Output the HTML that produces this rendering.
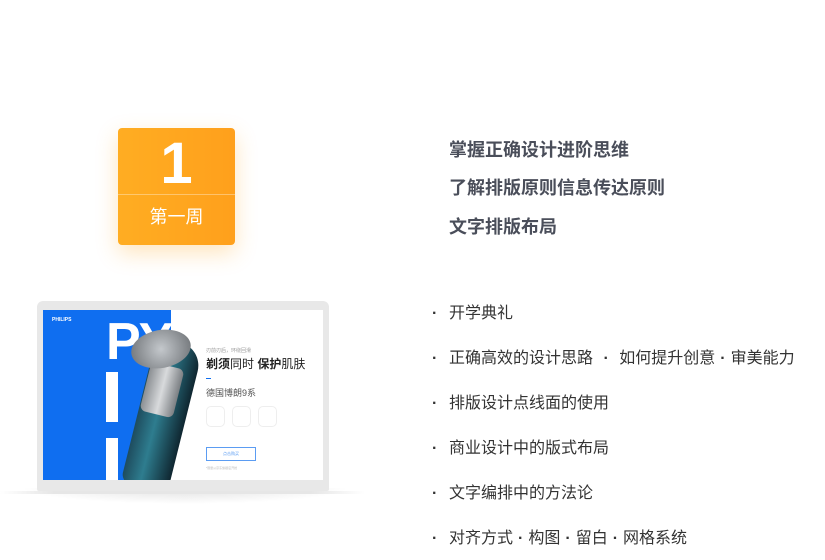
<!DOCTYPE html>
<html><head><meta charset="utf-8"><style>
*{margin:0;padding:0;box-sizing:border-box}
body{width:825px;height:560px;background:#fff;position:relative;overflow:hidden;font-family:"Liberation Sans","Noto Sans CJK SC",sans-serif}
.abs{position:absolute}
.box{left:118px;top:128px;width:117px;height:117px;border-radius:4px;background:linear-gradient(90deg,#ffad22,#ffa01c);box-shadow:0 8px 22px rgba(255,170,40,.3)}
.h{left:449px;font-size:18px;font-weight:bold;color:#4a4e5a;line-height:24px;white-space:nowrap}
.li{left:432px;font-size:16px;color:#333;line-height:22px;white-space:nowrap}
.li b{font-weight:bold;display:inline-block;width:17px}
.li i{font-style:normal;font-weight:bold;margin:0 6px}
.li u{text-decoration:none;font-weight:bold;margin:0 5px}
</style></head><body>
<div class="abs box"></div>
<div class="abs" style="left:118px;top:134px;width:117px;text-align:center;color:#fff;font-size:58px;font-weight:bold;line-height:60px">1</div>
<div class="abs" style="left:118px;top:194px;width:117px;height:1px;background:rgba(255,255,255,.35)"></div>
<div class="abs" style="left:118px;top:204px;width:117px;text-align:center;color:#fff;font-size:18px;line-height:26px">第一周</div>

<div class="abs h" style="top:138px">掌握正确设计进阶思维</div>
<div class="abs h" style="top:176px">了解排版原则信息传达原则</div>
<div class="abs h" style="top:215px">文字排版布局</div>

<div class="abs li" style="top:303px"><b>·</b>开学典礼</div>
<div class="abs li" style="top:348px"><b>·</b>正确高效的设计思路 <i>·</i> 如何提升创意<u>·</u>审美能力</div>
<div class="abs li" style="top:393px"><b>·</b>排版设计点线面的使用</div>
<div class="abs li" style="top:438px"><b>·</b>商业设计中的版式布局</div>
<div class="abs li" style="top:483px"><b>·</b>文字编排中的方法论</div>
<div class="abs li" style="top:528px"><b>·</b>对齐方式<u>·</u>构图<u>·</u>留白<u>·</u>网格系统</div>

<div class="abs" style="left:20px;top:488px;width:330px;height:16px;background:radial-gradient(ellipse at center top,rgba(0,0,0,.12),rgba(0,0,0,0) 70%)"></div>
<div class="abs" style="left:0;top:491px;width:365px;height:3px;background:linear-gradient(90deg,rgba(230,230,230,0),#e6e6e6 15%,#e6e6e6 85%,rgba(230,230,230,0))"></div>
<div class="abs" style="left:37px;top:301px;width:292px;height:190px;background:#e8e8e8;border-radius:6px 6px 2px 2px"></div>
<div class="abs" style="left:43px;top:310px;width:280px;height:170px;background:#fff;overflow:hidden">
  <div class="abs" style="left:0;top:0;width:128px;height:170px;background:#0f6ef0"></div>
  <div class="abs" style="left:9px;top:7px;color:#fff;font-size:5px;font-weight:bold">PHILIPS</div>
  <div class="abs" style="left:63px;top:4px;color:#fff;font-size:52px;font-weight:bold;line-height:56px;letter-spacing:-2px">PY</div>
  <div class="abs" style="left:63px;top:62px;width:12px;height:50px;background:#fff"></div>
  <div class="abs" style="left:63px;top:128px;width:12px;height:42px;background:#fff"></div>
  <div class="abs" style="left:110px;top:140px;width:18px;height:30px;background:#fff;border-radius:9px 0 0 9px"></div>
  <div class="abs" style="left:95px;top:30px;width:48px;height:150px;border-radius:24px 24px 10px 10px;background:linear-gradient(90deg,#1e4c5e,#2e7d8f 40%,#0f2630);transform:rotate(14deg)"></div>
  <div class="abs" style="left:102px;top:55px;width:34px;height:50px;border-radius:6px;background:linear-gradient(90deg,#8a8e92,#d8dadc,#7a7e82);transform:rotate(14deg)"></div>
  <div class="abs" style="left:88px;top:20px;width:60px;height:38px;border-radius:50%;background:radial-gradient(circle,#c4c8cc,#6a6e72);transform:rotate(-10deg)"></div>
  <div class="abs" style="left:163px;top:37px;color:#999;font-size:5px">刃前刃后，环绕回滑</div>
  <div class="abs" style="left:163px;top:45px;color:#222;font-size:12px;white-space:nowrap"><b>剃须</b>同时 <b>保护</b>肌肤</div>
  <div class="abs" style="left:163px;top:68px;width:5px;height:1px;background:#0f6ef0"></div>
  <div class="abs" style="left:163px;top:76px;color:#555;font-size:9px">德国博朗9系</div>
  <div class="abs" style="left:163px;top:96px;width:19px;height:21px;border:1px solid #eee;border-radius:5px"></div>
  <div class="abs" style="left:189px;top:96px;width:19px;height:21px;border:1px solid #eee;border-radius:5px"></div>
  <div class="abs" style="left:215px;top:96px;width:19px;height:21px;border:1px solid #eee;border-radius:5px"></div>
  <div class="abs" style="left:163px;top:137px;width:50px;height:14px;border:1px solid #5b9cf2;color:#5b9cf2;font-size:4px;text-align:center;line-height:12px">点击购买</div>
  <div class="abs" style="left:163px;top:156px;color:#bbb;font-size:3px">*限量从京东旗舰店开抢</div>
</div>
</body></html>
